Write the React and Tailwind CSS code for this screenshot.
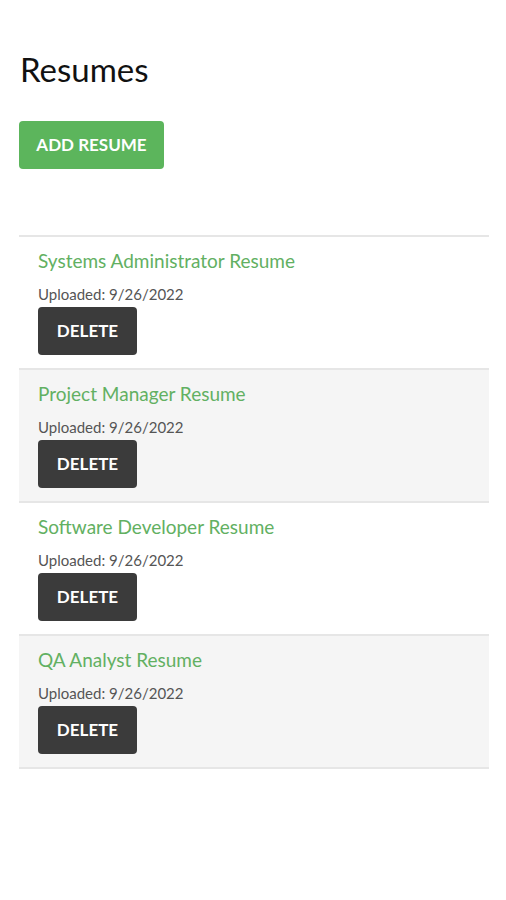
import React from "react";

const resumes = [
  { id: 1, title: "Systems Administrator Resume", uploaded: "9/26/2022" },
  { id: 2, title: "Project Manager Resume", uploaded: "9/26/2022" },
  { id: 3, title: "Software Developer Resume", uploaded: "9/26/2022" },
  { id: 4, title: "QA Analyst Resume", uploaded: "9/26/2022" },
];

function ResumeRow({ resume, striped }) {
  return (
    <li
      className={`border-t-2 border-[#e6e6e6] pl-[19px] pr-4 pt-3 pb-[13px] ${
        striped ? "bg-[#f5f5f5]" : "bg-white"
      }`}
    >
      <a href="#" className="block text-[19px] leading-6 text-[#62b062]">
        {resume.title}
      </a>
      <p className="mt-[11px] text-[15px] leading-5 text-[#555]">
        Uploaded: {resume.uploaded}
      </p>
      <button className="mt-[3px] h-12 w-[99px] rounded-[4px] bg-[#3b3b3b] text-[17px] font-bold text-white">
        DELETE
      </button>
    </li>
  );
}

export default function App() {
  return (
    <div
      className="min-h-screen bg-white pt-[50px] px-[19px]"
      style={{ fontFamily: "Lato, 'Open Sans', sans-serif" }}
    >
      <h1 className="ml-px text-[33px] leading-[38px] text-[#111]">Resumes</h1>
      <button className="mt-[33px] h-12 w-[145px] rounded-[4px] bg-[#5cb55c] text-[17px] font-bold text-white">
        ADD RESUME
      </button>
      <ul className="mt-[66px] w-[470px] border-b-2 border-[#e6e6e6]">
        {resumes.map((r, i) => (
          <ResumeRow key={r.id} resume={r} striped={i % 2 === 1} />
        ))}
      </ul>
    </div>
  );
}
